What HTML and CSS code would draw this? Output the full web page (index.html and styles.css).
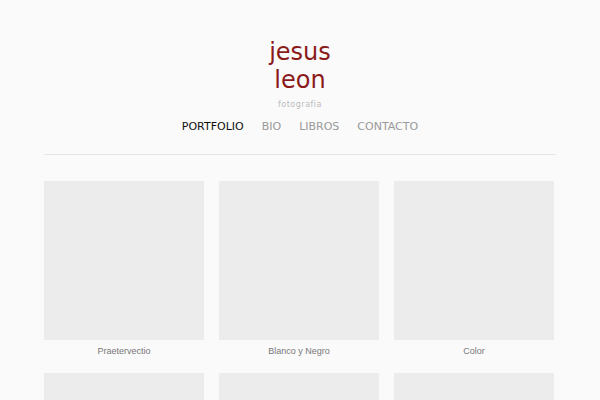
FILE: index.html
```html
<!DOCTYPE html>
<html lang="es">
<head>
    <meta charset="UTF-8">
    <meta name="viewport" content="width=device-width, initial-scale=1.0">
    <title>jesus leon - fotografia</title>
    <link rel="stylesheet" href="styles.css">
</head>
<body>

<div class="container">
    <div class="header">
        <h1 class="logo">jesus<br>leon</h1>
        <p class="tagline">fotografia</p>
        <ul class="nav">
            <li><a class="active" href="#">PORTFOLIO</a></li>
            <li><a href="#">BIO</a></li>
            <li><a href="#">LIBROS</a></li>
            <li><a href="#">CONTACTO</a></li>
        </ul>
    </div>

    <!-- galerias -->
    <div class="gallery">
        <div class="item">
            <div class="thumb"></div>
            <p class="caption">Praetervectio</p>
        </div>
        <div class="item">
            <div class="thumb"></div>
            <p class="caption">Blanco y Negro</p>
        </div>
        <div class="item">
            <div class="thumb"></div>
            <p class="caption">Color</p>
        </div>
        <div class="item">
            <div class="thumb"></div>
        </div>
        <div class="item">
            <div class="thumb"></div>
        </div>
        <div class="item">
            <div class="thumb"></div>
        </div>
    </div>
</div>

</body>
</html>
```

FILE: styles.css
```css
body {
    font-family: "DejaVu Sans", sans-serif;
    background-color: #fafafa;
    margin: 0;
    padding: 0;
}
.container {
    width: 512px;
    margin: 0 auto;
}
.header {
    text-align: center;
    padding-top: 38px;
    padding-bottom: 20px;
    border-bottom: 1px solid #e6e6e6;
}
.logo {
    margin: 0;
    font-size: 24px;
    font-weight: normal;
    line-height: 28px;
    color: #8b1a1a;
}
.tagline {
    margin: 6px 0 0 0;
    font-size: 8px;
    letter-spacing: 0.5px;
    color: #bbb;
}
.nav {
    list-style: none;
    margin: 6px 0 0 0;
    padding: 0;
    display: flex;
    justify-content: center;
    gap: 18px;
}
.nav a {
    text-decoration: none;
    font-size: 11px;
    color: #999;
}
.nav a.active {
    color: #111;
}
.gallery {
    display: grid;
    grid-template-columns: repeat(3, 160px);
    column-gap: 15px;
    row-gap: 10px;
    padding-top: 26px;
}
.thumb {
    width: 160px;
    height: 159px;
    background-color: #ececec;
}
.caption {
    margin: 0;
    padding: 6px 0 0 0;
    height: 17px;
    text-align: center;
    font-family: "Liberation Sans", sans-serif;
    font-size: 9px;
    color: #777;
}
```
